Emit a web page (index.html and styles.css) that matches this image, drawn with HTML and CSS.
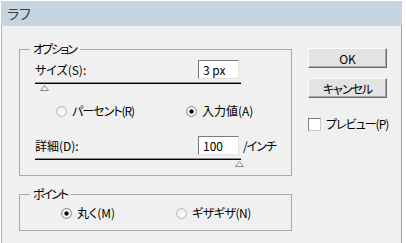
FILE: index.html
```html
<!DOCTYPE html>
<html lang="ja">

<head>
    <meta charset="UTF-8">
    <meta name="viewport" content="width=device-width, initial-scale=1.0">
    <title>ラフ</title>
    <link rel="stylesheet" href="styles.css">
</head>

<body>
    <div class="window">
        <div class="titlebar">ラフ</div>
        <div class="content">
            <div class="left">
                <fieldset class="group options">
                    <legend class="tight">オプション</legend>
                    <div class="group-body">
                        <div class="field-row">
                            <span class="field-label">サイズ(S):</span>
                            <span class="num-box">3 px</span>
                        </div>
                        <div class="slider">
                            <div class="track"></div>
                            <svg class="thumb thumb-size" width="9" height="6" viewBox="0 0 9 6">
                                <path d="M0.5 5.5 L4.5 0.5 L8.5 5.5 Z" fill="#f4f4f4" stroke="#8c8c8c" stroke-width="1"/>
                            </svg>
                        </div>
                        <div class="radio-row options-radios">
                            <label class="radio"><span class="dot"></span><span class="narrow">パーセント(R)</span></label>
                            <label class="radio"><span class="dot checked"></span>入力値(A)</label>
                        </div>
                        <div class="field-row">
                            <span class="field-label">詳細(D):</span>
                            <span class="num-box">100</span>
                            <span class="unit narrow">/インチ</span>
                        </div>
                        <div class="slider">
                            <div class="track"></div>
                            <svg class="thumb thumb-detail" width="9" height="6" viewBox="0 0 9 6">
                                <path d="M0.5 5.5 L4.5 0.5 L8.5 5.5 Z" fill="#f4f4f4" stroke="#8c8c8c" stroke-width="1"/>
                            </svg>
                        </div>
                    </div>
                </fieldset>
                <fieldset class="group points">
                    <legend class="tight">ポイント</legend>
                    <div class="group-body">
                        <div class="radio-row points-radios">
                            <label class="radio"><span class="dot checked"></span>丸く(M)</label>
                            <label class="radio"><span class="dot"></span><span class="semi">ギザギザ(N)</span></label>
                        </div>
                    </div>
                </fieldset>
            </div>
            <div class="right">
                <button class="btn">OK</button>
                <button class="btn"><span class="narrow">キャンセル</span></button>
                <label class="check"><span class="box"></span><span class="narrow">プレビュー(P)</span></label>
            </div>
        </div>
    </div>
</body>

</html>
```

FILE: styles.css
```css
body {
    margin: 0;
    background-color: #fff;
    font-family: "Noto Sans CJK JP", "Noto Sans", sans-serif;
    font-size: 12px;
    font-feature-settings: "palt";
    color: #000;
}

/* katakana in the dialog font runs narrower than Noto */
.semi {
    letter-spacing: -0.5px;
}

.narrow {
    letter-spacing: -1px;
}

.tight {
    letter-spacing: -2px;
}

.window {
    margin: 1px 0 0 1px;
    width: 401px;
    height: 242px;
    display: flex;
    flex-direction: column;
}

.titlebar {
    height: 25px;
    line-height: 25px;
    padding-left: 6px;
    background-color: #c5d4e1;
    color: #404040;
    font-size: 14px;
}

.content {
    flex: 1;
    display: flex;
    align-items: flex-start;
    padding: 16px 0 0 17px;
    background-color: #f0f0f0;
    border-left: 1px solid #b4b4b4;
    border-right: 1px solid #a0a0a0;
}

.left {
    width: 273px;
}

.group {
    box-sizing: border-box;
    width: 273px;
    margin: 0;
    padding: 0;
    border: 1px solid #a9a9a9;
}

.group legend {
    margin-left: 10px;
    padding: 0 4px 0 3px;
    line-height: 14px;
}

.options {
    height: 134px;
}

.points {
    height: 44px;
    margin-top: 11px;
}

.group-body {
    padding-left: 15px;
}

.field-row {
    display: flex;
    align-items: center;
    height: 19px;
    margin-top: 4px;
    white-space: nowrap;
}

.field-row + .slider {
    margin-top: 3px;
}

.field-label {
    width: 163px;
}

.num-box {
    box-sizing: border-box;
    width: 41px;
    height: 19px;
    line-height: 17px;
    padding-left: 4px;
    background-color: #fff;
    border: 1px solid;
    border-color: #7a7a7a #e3e3e3 #e3e3e3 #7a7a7a;
}

.unit {
    margin-left: 4px;
}

.slider {
    width: 206px;
}

.track {
    height: 1px;
    border-top: 1px solid #8a8a8a;
    background-color: #000;
}

.thumb {
    display: block;
    margin-top: 1px;
}

.thumb-size {
    margin-left: 5px;
}

.thumb-detail {
    margin-left: 200px;
}

.radio-row {
    display: grid;
    height: 14px;
    align-items: center;
}

.options-radios {
    grid-template-columns: 130px auto;
    padding-left: 21px;
    margin-top: 13px;
    margin-bottom: 18px;
}

.points-radios {
    grid-template-columns: 115px auto;
    padding-left: 26px;
    margin-top: 5px;
}

.radio,
.check {
    display: flex;
    align-items: center;
    gap: 5px;
    line-height: 14px;
    white-space: nowrap;
}

.dot {
    box-sizing: border-box;
    width: 11px;
    height: 11px;
    border-radius: 50%;
    border: 1px solid #b8b8b8;
    background: radial-gradient(circle at 60% 60%, #fdfdfd 0, #e4e4e4 100%);
}

.dot.checked {
    border-color: #8c8c8c;
    background: radial-gradient(circle, #000 0, #000 1.8px, #f4f4f4 2.4px, #e2e2e2 100%);
}

.right {
    display: flex;
    flex-direction: column;
    margin: 6px 0 0 16px;
}

.btn {
    box-sizing: border-box;
    width: 79px;
    height: 20px;
    padding: 0;
    font: inherit;
    color: #000;
    background-color: #e3e3e3;
    border: 1px solid;
    border-color: #fdfdfd #6a6a6a #6a6a6a #fdfdfd;
    box-shadow: inset -1px -1px 0 #a8a8a8;
}

.btn + .btn {
    margin-top: 10px;
}

.check {
    margin-top: 19px;
}

.box {
    box-sizing: border-box;
    width: 13px;
    height: 13px;
    background-color: #fff;
    border: 1px solid;
    border-color: #7d7d7d #c9c9c9 #c9c9c9 #7d7d7d;
}
```
